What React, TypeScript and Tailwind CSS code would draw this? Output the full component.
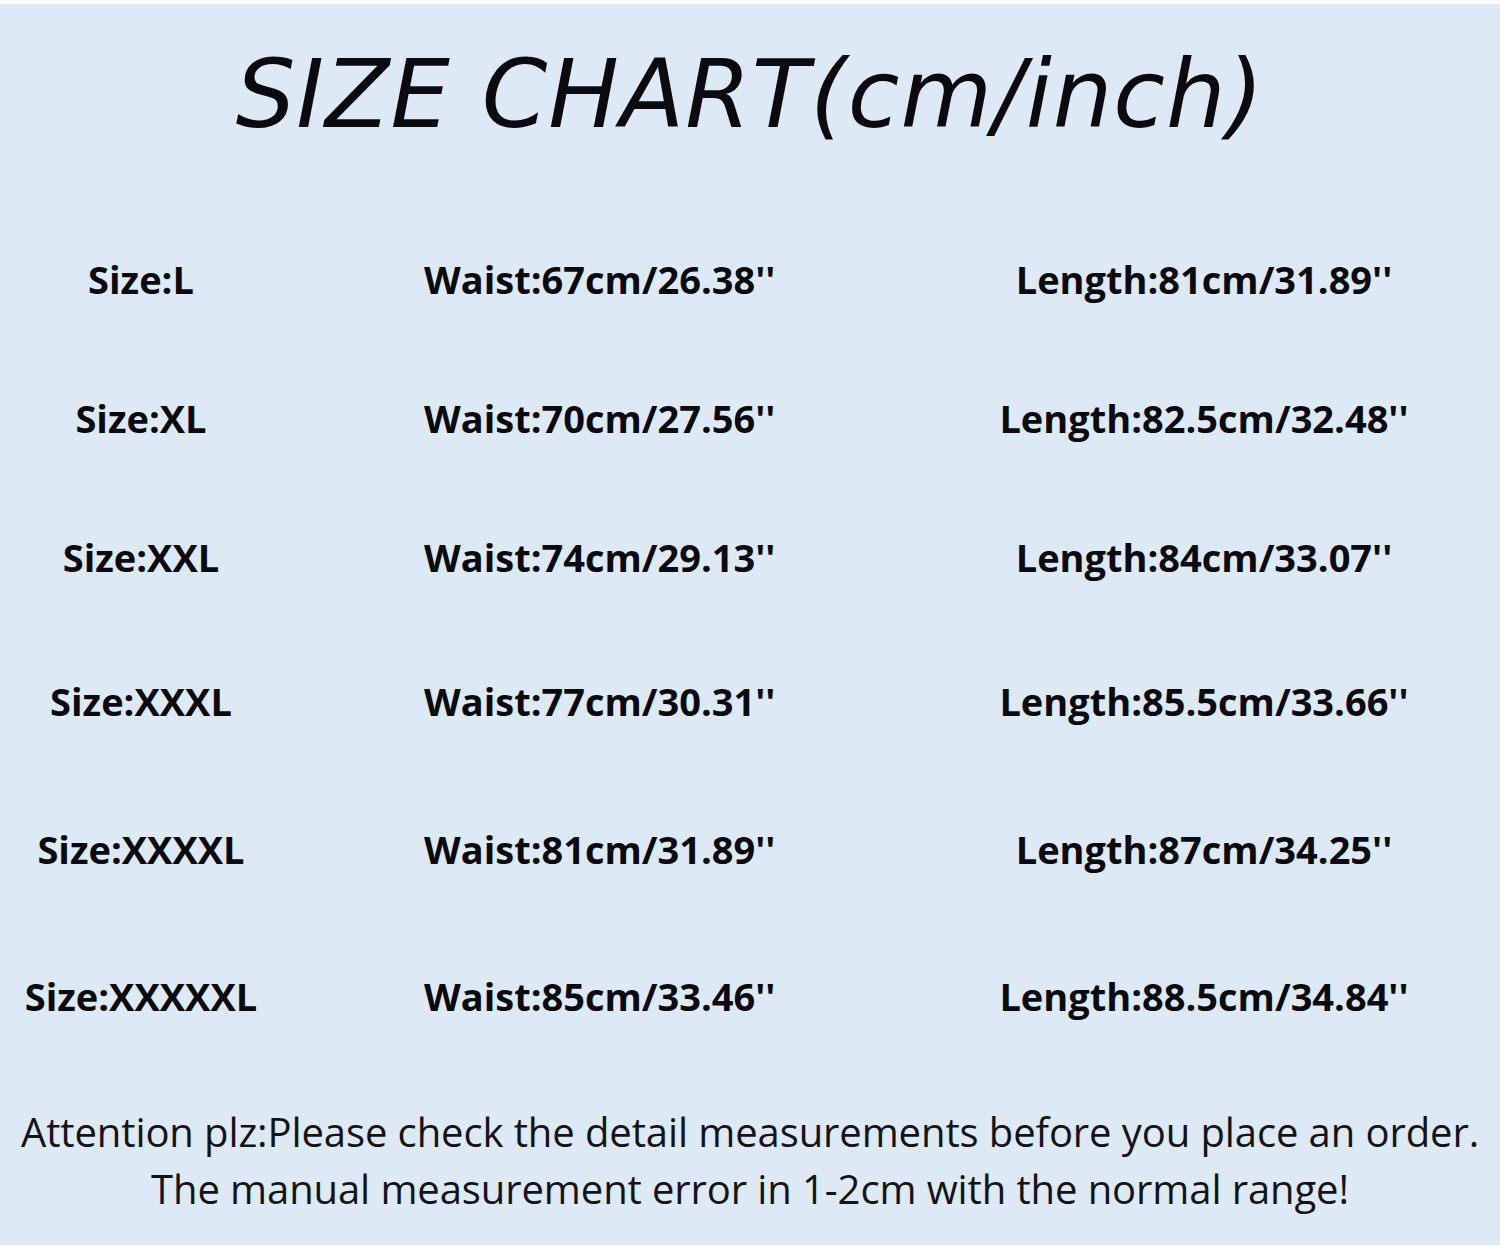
const rows = [
  { size: "Size:L", waist: "Waist:67cm/26.38''", length: "Length:81cm/31.89''", h: "h-[139px]" },
  { size: "Size:XL", waist: "Waist:70cm/27.56''", length: "Length:82.5cm/32.48''", h: "h-[139px]" },
  { size: "Size:XXL", waist: "Waist:74cm/29.13''", length: "Length:84cm/33.07''", h: "h-[144px]" },
  { size: "Size:XXXL", waist: "Waist:77cm/30.31''", length: "Length:85.5cm/33.66''", h: "h-[148px]" },
  { size: "Size:XXXXL", waist: "Waist:81cm/31.89''", length: "Length:87cm/34.25''", h: "h-[147px]" },
  { size: "Size:XXXXXL", waist: "Waist:85cm/33.46''", length: "Length:88.5cm/34.84''", h: "h-[100px]" },
];

export default function App() {
  return (
    <div className="w-[1500px] h-[1249px] bg-white py-[4px]">
      <div className="flex h-full flex-col bg-[#dde9f4] text-[#0b0b0f] font-['Open_Sans',sans-serif]">
        <h1 className="pt-[36px] text-center text-[94px] italic leading-[110px] tracking-[1px] font-['DejaVu_Sans',sans-serif] [font-weight:300]">
          SIZE CHART(cm/inch)
        </h1>

        <div className="mt-[104px] flex flex-col">
          {rows.map((r) => (
            <div key={r.size} className={`grid grid-cols-[282px_560px_1fr] items-start ${r.h}`}>
              <div className="text-center text-[38px] font-bold leading-[50px]">{r.size}</div>
              <div className="pl-[142px] text-[38px] font-bold leading-[50px]">{r.waist}</div>
              <div className="pl-[66px] text-center text-[38px] font-bold leading-[50px]">{r.length}</div>
            </div>
          ))}
        </div>

        <div className="mt-auto pb-[28px] text-center text-[40px] leading-[57px] tracking-[-0.1px] text-[#141418]">
          <p>Attention plz:Please check the detail measurements before you place an order.</p>
          <p>The manual measurement error in 1-2cm with the normal range!</p>
        </div>
      </div>
    </div>
  );
}
